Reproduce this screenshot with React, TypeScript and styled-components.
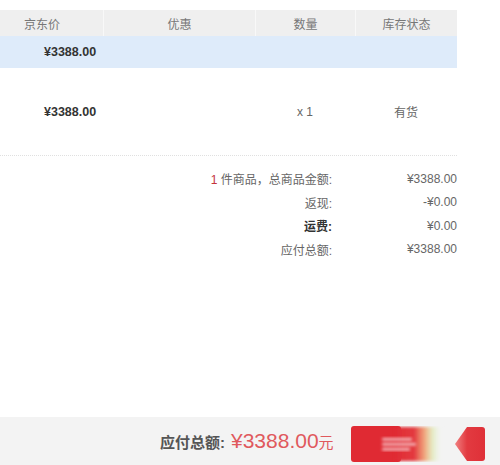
import styled, { createGlobalStyle } from 'styled-components';

const GlobalStyle = createGlobalStyle`
  html, body {
    margin: 0;
    padding: 0;
    background: #fff;
  }
  body {
    font-family: "Liberation Sans", "Noto Sans CJK SC", sans-serif;
    font-size: 12px;
    color: #666;
  }
`;

const Page = styled.div`
  display: flex;
  flex-direction: column;
  min-height: 465px;
  padding-top: 10px;
  box-sizing: border-box;
`;

const Table = styled.div`
  width: 457px;
`;

const Row = styled.div<{ $h: number; $bg?: string }>`
  display: grid;
  grid-template-columns: 103px 152px 100px 102px;
  height: ${p => p.$h}px;
  align-items: center;
  background: ${p => p.$bg || 'transparent'};
`;

const HeadCell = styled.div<{ $first?: boolean }>`
  height: 100%;
  display: flex;
  align-items: center;
  justify-content: ${p => (p.$first ? 'flex-start' : 'center')};
  padding-left: ${p => (p.$first ? '24px' : '0')};
  border-left: ${p => (p.$first ? 'none' : '1px solid #f8f8f8')};
  color: #777;
  font-size: 12px;
`;

const Cell = styled.div<{ $first?: boolean }>`
  text-align: ${p => (p.$first ? 'left' : 'center')};
  padding-left: ${p => (p.$first ? '44px' : '0')};
  color: #666;
`;

const Price = styled.span`
  font-weight: bold;
  color: #333;
  font-size: 12.5px;
`;

const ItemRow = styled(Row)`
  border-bottom: 1px dotted #e0e0e0;
`;

const Summary = styled.div`
  width: 457px;
  padding-top: 11px;
  display: grid;
  grid-template-columns: 1fr 125px;
  grid-auto-rows: 23.5px;
  align-items: center;
  text-align: right;
  color: #666;
`;

const Label = styled.div<{ $bold?: boolean }>`
  font-weight: ${p => (p.$bold ? 'bold' : 'normal')};
  color: ${p => (p.$bold ? '#333' : '#666')};
`;

const Red = styled.span`
  color: #c4333b;
`;

const Footer = styled.div`
  margin-top: auto;
  height: 48px;
  background: #f3f3f3;
  display: flex;
  align-items: center;
  padding-left: 160px;
  box-sizing: border-box;
`;

const TotalLabel = styled.span`
  font-weight: bold;
  color: #555;
  font-size: 15px;
`;

const TotalValue = styled.span`
  color: #e0595d;
  font-size: 21px;
  margin-left: 6px;
`;

const Unit = styled.span`
  color: #e0595d;
  font-size: 15px;
`;

const SubmitButton = styled.div`
  margin-left: 17px;
  margin-top: 5px;
  width: 136px;
  height: 36px;
  display: flex;
`;

function ButtonArt() {
  return (
    <svg width="136" height="36" viewBox="0 0 136 36">
      <defs>
        <linearGradient id="fade" x1="0" x2="1" y1="0" y2="0">
          <stop offset="0" stopColor="#e02a33" />
          <stop offset="0.4" stopColor="#e33a3f" />
          <stop offset="0.62" stopColor="#f09a6a" stopOpacity="0.85" />
          <stop offset="0.8" stopColor="#d8e8a0" stopOpacity="0.5" />
          <stop offset="1" stopColor="#f3f3f3" stopOpacity="0" />
        </linearGradient>
        <linearGradient id="tail" x1="0" x2="1">
          <stop offset="0" stopColor="#f08080" />
          <stop offset="0.4" stopColor="#e23a40" />
          <stop offset="1" stopColor="#df3038" />
        </linearGradient>
        <filter id="blur" x="-10%" y="-10%" width="120%" height="120%">
          <feGaussianBlur stdDeviation="1.6" />
        </filter>
      </defs>
      <rect x="0" y="0" width="50" height="36" rx="3" fill="#e02a33" />
      <rect x="44" y="1" width="48" height="34" fill="url(#fade)" filter="url(#blur)" />
      <g fill="#f6c5c7" filter="url(#blur)">
        <rect x="31" y="12" width="30" height="2.5" rx="1" />
        <rect x="31" y="17" width="34" height="2.5" rx="1" />
        <rect x="31" y="22" width="28" height="2.5" rx="1" />
      </g>
      <path d="M104 18 L116 1 L131 1 Q134 1 134 4 L134 32 Q134 35 131 35 L116 35 Z" fill="url(#tail)" />
    </svg>
  );
}

export default function App() {
  return (
    <>
      <GlobalStyle />
      <Page>
        <Table>
          <Row $h={26} $bg="#efefef">
            <HeadCell $first>京东价</HeadCell>
            <HeadCell>优惠</HeadCell>
            <HeadCell>数量</HeadCell>
            <HeadCell>库存状态</HeadCell>
          </Row>
          <Row $h={32} $bg="#deebfa">
            <Cell $first><Price>¥3388.00</Price></Cell>
            <Cell />
            <Cell />
            <Cell />
          </Row>
          <ItemRow $h={87}>
            <Cell $first><Price>¥3388.00</Price></Cell>
            <Cell />
            <Cell>x 1</Cell>
            <Cell>有货</Cell>
          </ItemRow>
        </Table>
        <Summary>
          <Label><Red>1</Red> 件商品，总商品金额:</Label>
          <div>¥3388.00</div>
          <Label>返现:</Label>
          <div>-¥0.00</div>
          <Label $bold>运费:</Label>
          <div>¥0.00</div>
          <Label>应付总额:</Label>
          <div>¥3388.00</div>
        </Summary>
        <Footer>
          <TotalLabel>应付总额:</TotalLabel>
          <TotalValue>¥3388.00</TotalValue>
          <Unit>元</Unit>
          <SubmitButton>
            <ButtonArt />
          </SubmitButton>
        </Footer>
      </Page>
    </>
  );
}
